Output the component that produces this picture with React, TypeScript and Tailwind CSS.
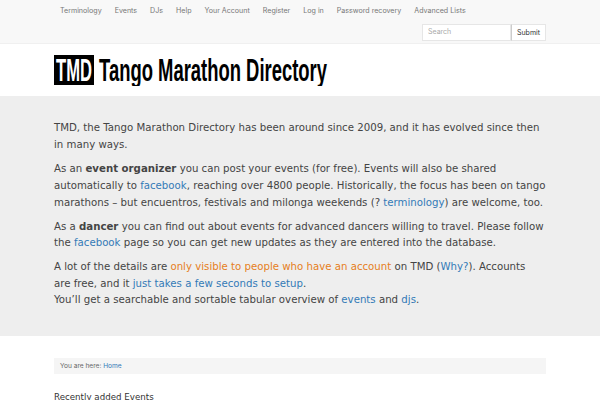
import React from 'react';

const navItems = ['Terminology', 'Events', 'DJs', 'Help', 'Your Account', 'Register', 'Log in', 'Password recovery', 'Advanced Lists'];

function Logo() {
  return (
    <svg width="274" height="38" viewBox="0 0 274 38" className="block">
      <rect x="0" y="7" width="40" height="30" fill="#000" />
      <text x="2" y="33" fontFamily="Liberation Sans" fontWeight="700" fontSize="31" fill="#fff" textLength="36" lengthAdjust="spacingAndGlyphs">TMD</text>
      <text x="45" y="33" fontFamily="Liberation Sans" fontWeight="700" fontSize="31" fill="#000" textLength="228" lengthAdjust="spacingAndGlyphs">Tango Marathon Directory</text>
    </svg>
  );
}

function A({ children }: { children: React.ReactNode }) {
  return <a className="text-[#337ab7]">{children}</a>;
}

export default function App() {
  return (
    <div className="w-[600px] h-[400px] overflow-hidden bg-white font-['DejaVu_Sans',sans-serif] text-[#444]">
      <div className="h-[44px] bg-[#f8f8f8] border-b border-[#f0f0f0] px-[54px]">
        <div className="flex gap-[13px] pl-[6px] h-[22px] mb-[2px] items-center font-['Inter',sans-serif] text-[7.1px] text-[#777]">
          {navItems.map((item) => (
            <a key={item}>{item}</a>
          ))}
        </div>
        <div className="flex justify-end">
          <div className="w-[89px] h-[17px] bg-white border border-[#e6e6e6] pl-[5px] font-['Inter',sans-serif] text-[7px] leading-[13px] text-[#aaa]">Search</div>
          <div className="w-[35px] h-[17px] bg-white border border-l-[#ccc] border-[#e6e6e6] text-center font-['Inter',sans-serif] text-[7px] leading-[16px] text-[#333]">Submit</div>
        </div>
      </div>
      <div className="h-[52px] bg-white px-[54px] pt-[4px]">
        <Logo />
      </div>
      <div className="h-[240px] bg-[#eee] px-[54px] pt-[24px] text-[10.2px] leading-[16.7px]">
        <p className="mb-[8px]">TMD, the Tango Marathon Directory has been around since 2009, and it has evolved since then in many ways.</p>
        <p className="mb-[7px]">
          As an <b>event organizer</b> you can post your events (for free). Events will also be shared automatically to <A>facebook</A>, reaching over 4800 people. Historically, the focus has been on tango marathons – but encuentros, festivals and milonga weekends (? <A>terminology</A>) are welcome, too.
        </p>
        <p className="mb-[7px]">
          As a <b>dancer</b> you can find out about events for advanced dancers willing to travel. Please follow the <A>facebook</A> page so you can get new updates as they are entered into the database.
        </p>
        <p>
          A lot of the details are <span className="text-[#e67e22]">only visible to people who have an account</span> on TMD (<A>Why?</A>). Accounts
          <br />
          are free, and it <A>just takes a few seconds to setup</A>.
          <br />
          You’ll get a searchable and sortable tabular overview of <A>events</A> and <A>djs</A>.
        </p>
      </div>
      <div className="px-[54px] pt-[22px]">
        <div className="h-[16px] bg-[#f5f5f5] pl-[6px] font-['Inter',sans-serif] text-[6.6px] leading-[16px] text-[#666]">
          You are here: <A>Home</A>
        </div>
        <h3 className="mt-[15px] text-[8.7px] leading-[16px] font-medium text-[#333]">Recently added Events</h3>
      </div>
    </div>
  );
}
